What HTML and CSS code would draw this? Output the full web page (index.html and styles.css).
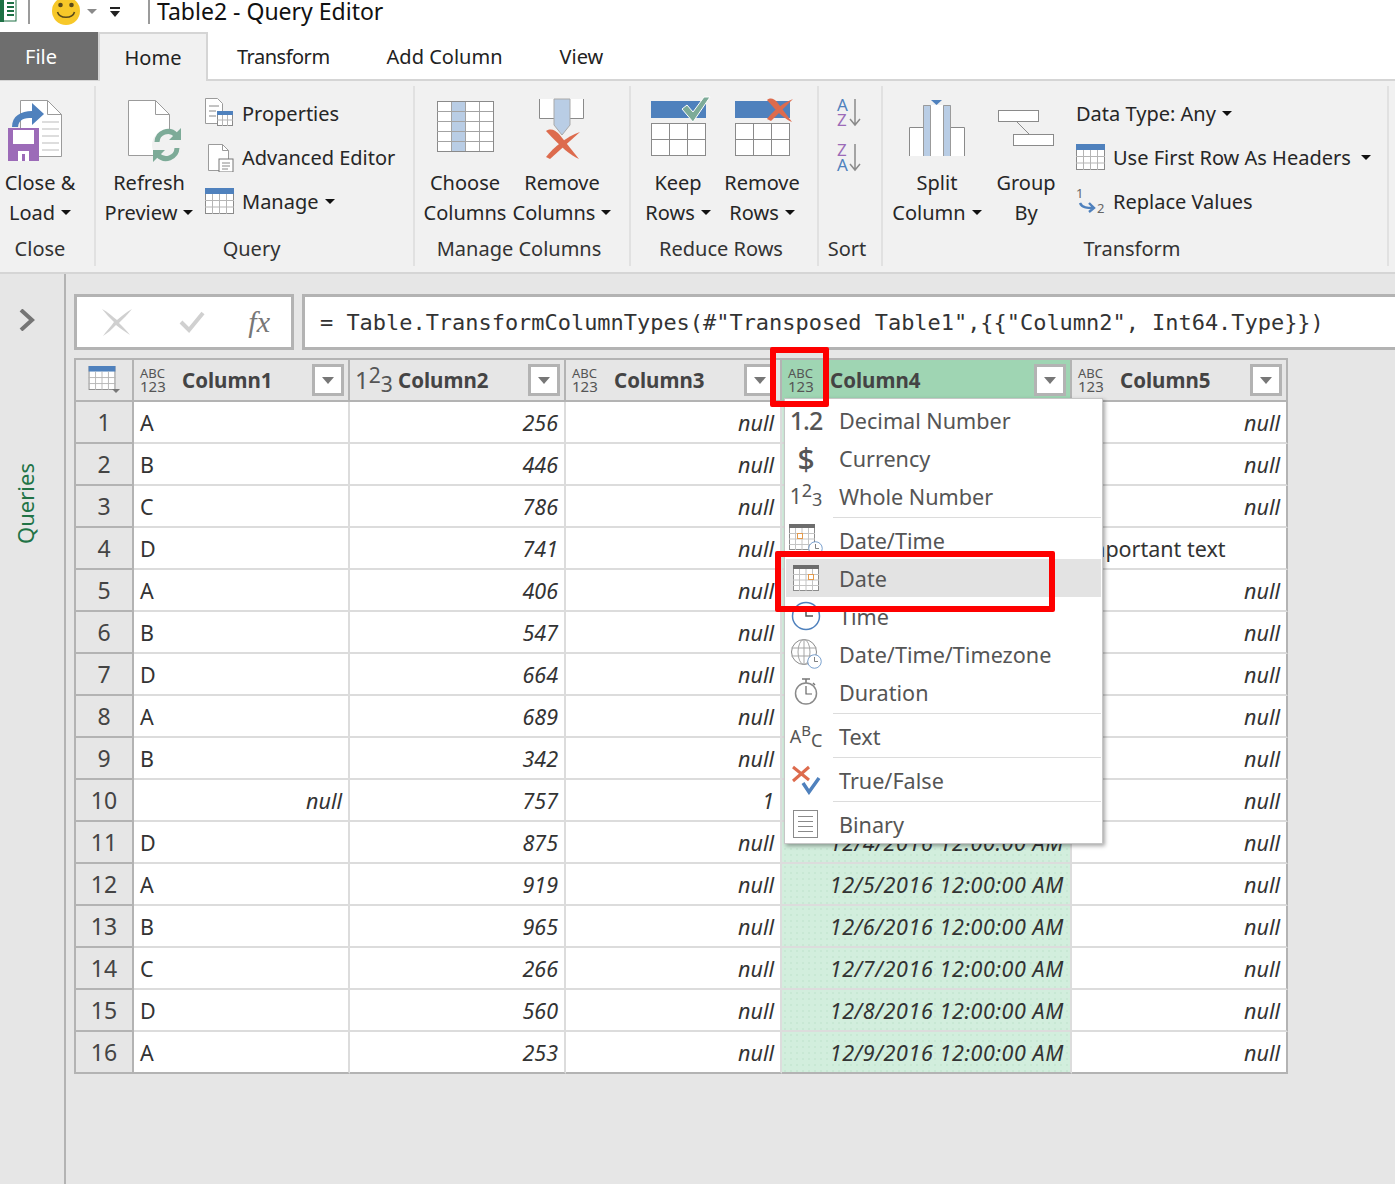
FILE: index.html
```html
<!DOCTYPE html>
<html lang="en">
<head>
    <meta charset="UTF-8">
    <title>Table2 - Query Editor</title>
    <link rel="stylesheet" href="styles.css">
</head>
<body>
    <!-- shared icons -->
    <svg class="sprites" width="0" height="0">
        <symbol id="tableBlue" viewBox="0 0 29 26">
            <rect x=".5" y=".5" width="28" height="25" fill="#fff" stroke="#8a8a8a"/>
            <rect width="29" height="6" fill="#4f81bd"/>
            <path d="M0 12.500h29M0 19h29M7.500 6v20M14.500 6v20M21.500 6v20" stroke="#b5b5b5" fill="none"/>
        </symbol>
        <symbol id="calendar" viewBox="0 0 26 26">
            <rect x=".5" y=".5" width="25" height="25" fill="#fff" stroke="#8c8c8c"/>
            <rect width="26" height="4" fill="#6d6d6d"/>
            <path d="M0 9.500h26M0 15h26M0 20.500h26M6.500 4v22M13 4v22M19.500 4v22" stroke="#c4c4c4" fill="none"/>
        </symbol>
        <symbol id="clock" viewBox="0 0 30 30">
            <circle cx="15" cy="15" r="13.500" fill="#fff" stroke="#4f81bd" stroke-width="1.500"/>
            <path d="M15 6v9h7" fill="none" stroke="#555" stroke-width="1.500"/>
        </symbol>
    </svg>

    <header class="titleBar">
        <svg class="excelIcon" width="20" height="24" viewBox="0 0 20 24">
            <rect x="5" y="-2" width="14" height="23" fill="#fff" stroke="#1e7145"/>
            <rect x="0" y="-2" width="7" height="24" fill="#1e7145"/>
            <path d="M10 3h7M10 7h7M10 11h7M10 15h7" stroke="#1e7145" stroke-width="2"/>
        </svg>
        <span class="titleSep sepFirst"></span>
        <svg class="smiley" width="30" height="30" viewBox="0 0 30 30">
            <circle cx="15" cy="15" r="14" fill="#f7c829"/>
            <circle cx="9.500" cy="9" r="2.300" fill="#5a4a1a"/>
            <circle cx="20.500" cy="9" r="2.300" fill="#5a4a1a"/>
            <path d="M6.500 16c2 7 15 7 17 0" fill="none" stroke="#5a4a1a" stroke-width="1.600"/>
        </svg>
        <span class="qatArrow"></span>
        <svg class="qatMenu" width="14" height="10" viewBox="0 0 14 10"><path d="M2 0h10v2H2zM2 4h10L7 10z" fill="#222"/></svg>
        <span class="titleSep"></span>
        <span class="titleText">Table2 - Query Editor</span>
    </header>

    <nav class="tabs">
        <div class="tab tabFile">File</div>
        <div class="tab tabActive">Home</div>
        <div class="tab tabTransform">Transform</div>
        <div class="tab">Add Column</div>
        <div class="tab">View</div>
    </nav>

    <section class="ribbon">
        <div class="group groupClose">
            <div class="groupBody">
                <div class="bigBtn btnClose">
                    <svg class="bigIcon" width="62" height="70" viewBox="9 0 62 70">
                        <path d="M20.500 5.500h27l14 14v42h-41z" fill="#fff" stroke="#9b9b9b"/>
                        <path d="M47.500 5.500v14h14" fill="none" stroke="#9b9b9b"/>
                        <path d="M42 27h17M42 34h17M42 41h17M42 48h17M42 55h17" stroke="#bbb"/>
                        <path d="M12 32c0-11 9-16 20-16V8l12 11-12 11v-7c-8 0-13 1-14 9z" fill="#4f81bd"/>
                        <path d="M8 33h31v33H8z" fill="#9c6bb8"/>
                        <path d="M13 35h21v14H13zM18 56h11v10H18z" fill="#fff"/>
                        <path d="M22 59h3v7h-3z" fill="#9c6bb8"/>
                    </svg>
                    <span>Close &amp;</span>
                    <span>Load<i class="caret"></i></span>
                </div>
            </div>
            <div class="groupLabel">Close</div>
        </div>

        <div class="group groupQuery">
            <div class="groupBody">
                <div class="bigBtn btnRefresh">
                    <svg class="bigIcon" width="64" height="70" viewBox="0 0 64 70">
                        <path d="M11.500 5.500h27l14 14v41h-41z" fill="#fff" stroke="#9b9b9b"/>
                        <path d="M38.500 5.500v14h14" fill="none" stroke="#9b9b9b"/>
                        <circle cx="50" cy="50" r="15" fill="#f1f1f1"/>
                        <path d="M40 47a11 11 0 0 1 19-7M60 53a11 11 0 0 1-19 7" fill="none" stroke="#7dab98" stroke-width="5"/>
                        <path d="M64 33v12H52zM36 67V55h12z" fill="#7dab98"/>
                    </svg>
                    <span>Refresh</span>
                    <span>Preview<i class="caret"></i></span>
                </div>
                <div class="smallList">
                    <div class="smallBtn">
                        <svg width="30" height="30" viewBox="0 0 30 30">
                            <path d="M.5.5h12l5 5v20H.5z" fill="#fff" stroke="#9b9b9b"/>
                            <path d="M4 8h10M4 13h7M4 18h7" stroke="#888"/>
                            <rect x="12.500" y="13.500" width="15" height="14" fill="#fff" stroke="#8a8a8a"/>
                            <rect x="12" y="13" width="16" height="4" fill="#4f81bd"/>
                            <path d="M12 22h16M17.500 17v11M22.500 17v11" stroke="#b5b5b5"/>
                        </svg>
                        <span>Properties</span>
                    </div>
                    <div class="smallBtn">
                        <svg width="30" height="30" viewBox="0 0 30 30">
                            <path d="M3.500 2.500h14l6 6v20h-20z" fill="#fff" stroke="#9b9b9b"/>
                            <path d="M17.500 2.500v6h6" fill="none" stroke="#9b9b9b"/>
                            <rect x="14" y="17" width="14" height="13" fill="#fff" stroke="#777"/>
                            <path d="M17 21h8M17 24h8M17 27h6" stroke="#888"/>
                        </svg>
                        <span>Advanced Editor</span>
                    </div>
                    <div class="smallBtn">
                        <svg width="30" height="30" viewBox="0 0 30 30"><use href="#tableBlue" width="29" height="26" y="2"/></svg>
                        <span>Manage<i class="caret"></i></span>
                    </div>
                </div>
            </div>
            <div class="groupLabel">Query</div>
        </div>

        <div class="group groupManage">
            <div class="groupBody">
                <div class="bigBtn btnChoose">
                    <svg class="bigIcon" width="60" height="70" viewBox="0 0 60 70">
                        <rect x="2.500" y="6.500" width="56" height="50" fill="#fff" stroke="#8a8a8a"/>
                        <rect x="17" y="7" width="14" height="49" fill="#b9cde5"/>
                        <path d="M2 16.500h56M2 26.500h56M2 36.500h56M2 46.500h56M16.500 7v49M30.500 7v49M44.500 7v49" stroke="#a3a3a3" fill="none"/>
                    </svg>
                    <span>Choose</span>
                    <span>Columns</span>
                </div>
                <div class="bigBtn btnRemoveCols">
                    <svg class="bigIcon" width="48" height="70" viewBox="0 0 48 70">
                        <path d="M1.500 4v19.500h44V4" fill="#fff" stroke="#8a8a8a"/>
                        <path d="M16 4h16v26l-8 10-8-10z" fill="#b9cde5" stroke="#a9a9a9"/>
                        <path d="M8 36c5-3 9-1 13 3l20 25c-8-3-18-12-33-28z" fill="#dd6b4d"/>
                        <path d="M42 37L12 64l-4-2c8-10 20-20 34-25z" fill="#dd6b4d"/>
                    </svg>
                    <span>Remove</span>
                    <span>Columns<i class="caret"></i></span>
                </div>
            </div>
            <div class="groupLabel">Manage Columns</div>
        </div>

        <div class="group groupReduce">
            <div class="groupBody">
                <div class="bigBtn btnRows">
                    <svg class="bigIcon" width="62" height="70" viewBox="-2 0 62 70">
                        <rect x="2" y="6" width="55" height="17" fill="#4f81bd"/>
                        <rect x="2.500" y="28.500" width="54" height="32" fill="#fff" stroke="#8a8a8a"/>
                        <path d="M2 44.500h55M20.500 28v33M38.500 28v33" stroke="#8a8a8a"/>
                        <path d="M33 14l5-4 6 7L55 2h6L44 27z" fill="#7dab98" stroke="#fff"/>
                    </svg>
                    <span>Keep</span>
                    <span>Rows<i class="caret"></i></span>
                </div>
                <div class="bigBtn btnRows">
                    <svg class="bigIcon" width="62" height="70" viewBox="-2 0 62 70">
                        <rect x="2" y="6" width="55" height="17" fill="#4f81bd"/>
                        <rect x="2.500" y="28.500" width="54" height="32" fill="#fff" stroke="#8a8a8a"/>
                        <path d="M2 44.500h55M20.500 28v33M38.500 28v33" stroke="#8a8a8a"/>
                        <path d="M34 5c4-3 7-1 10 2l15 20c-6-2-14-9-25-22z" fill="#dd6b4d"/>
                        <path d="M60 4L38 26l-4-2c6-8 14-15 26-20z" fill="#dd6b4d"/>
                    </svg>
                    <span>Remove</span>
                    <span>Rows<i class="caret"></i></span>
                </div>
            </div>
            <div class="groupLabel">Reduce Rows</div>
        </div>

        <div class="group groupSort">
            <div class="groupBody sortBody">
                <svg width="28" height="32" viewBox="0 0 28 32">
                    <text class="sortLetter" x="1" y="14" fill="#4f81bd">A</text>
                    <text class="sortLetter" x="1" y="29" fill="#9c6bb8">Z</text>
                    <path d="M19 2v26M14 22l5 6 5-6" fill="none" stroke="#8a8a8a" stroke-width="1.500"/>
                </svg>
                <svg width="28" height="32" viewBox="0 0 28 32">
                    <text class="sortLetter" x="1" y="14" fill="#9c6bb8">Z</text>
                    <text class="sortLetter" x="1" y="29" fill="#4f81bd">A</text>
                    <path d="M19 2v26M14 22l5 6 5-6" fill="none" stroke="#8a8a8a" stroke-width="1.500"/>
                </svg>
            </div>
            <div class="groupLabel">Sort</div>
        </div>

        <div class="group groupTransform">
            <div class="groupBody">
                <div class="bigBtn btnSplit">
                    <svg class="bigIcon" width="58" height="70" viewBox="0 0 58 70">
                        <rect x="1" y="32" width="14" height="29" fill="#fff"/>
                        <rect x="43" y="32" width="14" height="29" fill="#fff"/>
                        <path d="M1.500 61V32.500H15M56.500 61V32.500H43" fill="none" stroke="#8a8a8a"/>
                        <rect x="15" y="10" width="8" height="51" fill="#b9cde5"/>
                        <rect x="35" y="10" width="8" height="51" fill="#b9cde5"/>
                        <rect x="23" y="10" width="12" height="51" fill="#fff"/>
                        <path d="M15.500 61V10.500h7V61M35.500 61V10.500h7V61" fill="none" stroke="#9b9b9b"/>
                        <path d="M23 5h11l-5.500 5z" fill="#4f81bd"/>
                    </svg>
                    <span>Split</span>
                    <span>Column<i class="caret"></i></span>
                </div>
                <div class="bigBtn btnGroupBy">
                    <svg class="bigIcon" width="58" height="70" viewBox="0 0 58 70">
                        <rect x="1.500" y="15.500" width="40" height="11" fill="#fff" stroke="#8a8a8a"/>
                        <rect x="16.500" y="39.500" width="40" height="11" fill="#fff" stroke="#8a8a8a"/>
                        <path d="M20 27l12 12" stroke="#8a8a8a"/>
                    </svg>
                    <span>Group</span>
                    <span>By</span>
                </div>
                <div class="smallList listTransform">
                    <div class="smallBtn noIcon"><span>Data Type: Any<i class="caret"></i></span></div>
                    <div class="smallBtn">
                        <svg width="30" height="30" viewBox="0 0 30 30"><use href="#tableBlue" width="29" height="26" y="2"/></svg>
                        <span>Use First Row As Headers<i class="caret caretWide"></i></span>
                    </div>
                    <div class="smallBtn">
                        <svg width="30" height="30" viewBox="0 0 30 30">
                            <text class="replaceNum" x="0" y="12">1</text>
                            <text class="replaceNum" x="21" y="27">2</text>
                            <path d="M4 17c2 5 8 5 13 5M13 17l5 5-5 4" fill="none" stroke="#4f81bd" stroke-width="2.400"/>
                        </svg>
                        <span>Replace Values</span>
                    </div>
                </div>
            </div>
            <div class="groupLabel">Transform</div>
        </div>
    </section>

    <main class="workspace">
        <aside class="sidebar">
            <svg class="chevron" width="16" height="22" viewBox="0 0 16 22"><path d="M2 1l11 10L2 21" fill="none" stroke="#757575" stroke-width="4"/></svg>
            <div class="queriesLabel">Queries</div>
        </aside>

        <div class="content">
            <div class="formulaRow">
                <div class="formulaBtns">
                    <svg width="32" height="28" viewBox="0 0 32 28"><path d="M1 1c6 3 11 8 15 11 5-4 9-8 15-11-4 5-9 10-13 14 4 4 8 8 11 12-5-3-10-7-14-10-4 4-8 8-13 11 3-5 8-9 11-14C9 10 5 6 1 1z" fill="#d0d0d0"/></svg>
                    <svg class="checkIcon" width="26" height="24" viewBox="0 0 26 24"><path d="M2 12l8 8L24 3" fill="none" stroke="#d0d0d0" stroke-width="4"/></svg>
                    <span class="fxLabel">fx</span>
                </div>
                <div class="formulaInput">= Table.TransformColumnTypes(#"Transposed Table1",{{"Column2", Int64.Type}})</div>
            </div>

            <div class="tableWrap">
                <div class="dataGrid">
                    <div class="headCell cornerCell">
                        <svg width="32" height="28" viewBox="0 0 32 28">
                            <use href="#tableBlue" width="28" height="24"/>
                            <path d="M24 23h8l-4 4z" fill="#777"/>
                        </svg>
                    </div>
                    <div class="headCell"><span class="typeIcon typeAny"><b>ABC</b><b>123</b></span><span class="colName">Column1</span><span class="filterBtn"></span></div>
                    <div class="headCell"><span class="typeIcon typeWhole">1<sup>2</sup><sub>3</sub></span><span class="colName">Column2</span><span class="filterBtn"></span></div>
                    <div class="headCell"><span class="typeIcon typeAny"><b>ABC</b><b>123</b></span><span class="colName">Column3</span><span class="filterBtn"></span></div>
                    <div class="headCell headSelected"><span class="typeIcon typeAny"><b>ABC</b><b>123</b></span><span class="colName">Column4</span><span class="filterBtn"></span></div>
                    <div class="headCell"><span class="typeIcon typeAny"><b>ABC</b><b>123</b></span><span class="colName">Column5</span><span class="filterBtn"></span></div>

                    <div class="rowNum">1</div><div class="cell">A</div><div class="cell num">256</div><div class="cell num">null</div><div class="cell num sel"></div><div class="cell num">null</div>
                    <div class="rowNum">2</div><div class="cell">B</div><div class="cell num">446</div><div class="cell num">null</div><div class="cell num sel"></div><div class="cell num">null</div>
                    <div class="rowNum">3</div><div class="cell">C</div><div class="cell num">786</div><div class="cell num">null</div><div class="cell num sel"></div><div class="cell num">null</div>
                    <div class="rowNum">4</div><div class="cell">D</div><div class="cell num">741</div><div class="cell num">null</div><div class="cell num sel"></div><div class="cell">Important text</div>
                    <div class="rowNum">5</div><div class="cell">A</div><div class="cell num">406</div><div class="cell num">null</div><div class="cell num sel"></div><div class="cell num">null</div>
                    <div class="rowNum">6</div><div class="cell">B</div><div class="cell num">547</div><div class="cell num">null</div><div class="cell num sel"></div><div class="cell num">null</div>
                    <div class="rowNum">7</div><div class="cell">D</div><div class="cell num">664</div><div class="cell num">null</div><div class="cell num sel"></div><div class="cell num">null</div>
                    <div class="rowNum">8</div><div class="cell">A</div><div class="cell num">689</div><div class="cell num">null</div><div class="cell num sel"></div><div class="cell num">null</div>
                    <div class="rowNum">9</div><div class="cell">B</div><div class="cell num">342</div><div class="cell num">null</div><div class="cell num sel"></div><div class="cell num">null</div>
                    <div class="rowNum">10</div><div class="cell num">null</div><div class="cell num">757</div><div class="cell num">1</div><div class="cell num sel"></div><div class="cell num">null</div>
                    <div class="rowNum">11</div><div class="cell">D</div><div class="cell num">875</div><div class="cell num">null</div><div class="cell num sel">12/4/2016 12:00:00 AM</div><div class="cell num">null</div>
                    <div class="rowNum">12</div><div class="cell">A</div><div class="cell num">919</div><div class="cell num">null</div><div class="cell num sel">12/5/2016 12:00:00 AM</div><div class="cell num">null</div>
                    <div class="rowNum">13</div><div class="cell">B</div><div class="cell num">965</div><div class="cell num">null</div><div class="cell num sel">12/6/2016 12:00:00 AM</div><div class="cell num">null</div>
                    <div class="rowNum">14</div><div class="cell">C</div><div class="cell num">266</div><div class="cell num">null</div><div class="cell num sel">12/7/2016 12:00:00 AM</div><div class="cell num">null</div>
                    <div class="rowNum">15</div><div class="cell">D</div><div class="cell num">560</div><div class="cell num">null</div><div class="cell num sel">12/8/2016 12:00:00 AM</div><div class="cell num">null</div>
                    <div class="rowNum">16</div><div class="cell">A</div><div class="cell num">253</div><div class="cell num">null</div><div class="cell num sel">12/9/2016 12:00:00 AM</div><div class="cell num">null</div>
                </div>

                <!-- data type dropdown, sits over the grid -->
                <div class="typeMenu">
                    <div class="menuItem"><span class="menuIcon iconDecimal">1.2</span>Decimal Number</div>
                    <div class="menuItem"><span class="menuIcon iconDollar">$</span>Currency</div>
                    <div class="menuItem"><span class="menuIcon typeWhole">1<sup>2</sup><sub>3</sub></span>Whole Number</div>
                    <div class="menuSep"></div>
                    <div class="menuItem">
                        <span class="menuIcon">
                            <svg width="34" height="32" viewBox="0 0 34 32">
                                <use href="#calendar" width="26" height="26"/>
                                <rect x="8.500" y="9.500" width="5" height="5" fill="#fff" stroke="#e39a4c"/>
                                <use href="#clock" x="19" y="17" width="15" height="15"/>
                            </svg>
                        </span>Date/Time
                    </div>
                    <div class="menuItem menuHover">
                        <span class="menuIcon">
                            <svg width="26" height="26" viewBox="0 0 26 26">
                                <use href="#calendar" width="26" height="26"/>
                                <rect x="15.500" y="9.500" width="5" height="5" fill="#fff" stroke="#e39a4c"/>
                            </svg>
                        </span>Date
                    </div>
                    <div class="menuItem">
                        <span class="menuIcon"><svg width="30" height="30" viewBox="0 0 30 30"><use href="#clock" width="30" height="30"/></svg></span>Time
                    </div>
                    <div class="menuItem">
                        <span class="menuIcon">
                            <svg width="32" height="30" viewBox="0 0 32 30">
                                <circle cx="14" cy="13" r="12.500" fill="#fff" stroke="#8a8a8a"/>
                                <ellipse cx="14" cy="13" rx="6" ry="12.500" fill="none" stroke="#a5a5a5"/>
                                <path d="M1.500 9h25M1.500 17h25M14 .5v25" stroke="#a5a5a5" fill="none"/>
                                <use href="#clock" x="17" y="15" width="15" height="15"/>
                            </svg>
                        </span>Date/Time/Timezone
                    </div>
                    <div class="menuItem">
                        <span class="menuIcon">
                            <svg width="24" height="28" viewBox="0 0 24 28">
                                <path d="M8 1h8M12 1v4M19 5l2 2" stroke="#777" stroke-width="1.500"/>
                                <circle cx="12" cy="15.500" r="10.500" fill="#fff" stroke="#8a8a8a" stroke-width="1.500"/>
                                <path d="M12 8v8h6" fill="none" stroke="#666" stroke-width="1.200"/>
                            </svg>
                        </span>Duration
                    </div>
                    <div class="menuSep"></div>
                    <div class="menuItem"><span class="menuIcon iconText">A<sup>B</sup><sub>C</sub></span>Text</div>
                    <div class="menuSep"></div>
                    <div class="menuItem">
                        <span class="menuIcon">
                            <svg width="30" height="30" viewBox="0 0 30 30">
                                <path d="M2 2l16 13M18 2L2 16" fill="none" stroke="#dd6b4d" stroke-width="3"/>
                                <path d="M12 18l6 9 10-14" fill="none" stroke="#4f81bd" stroke-width="3.500"/>
                            </svg>
                        </span>True/False
                    </div>
                    <div class="menuSep"></div>
                    <div class="menuItem">
                        <span class="menuIcon">
                            <svg width="26" height="28" viewBox="0 0 26 28">
                                <rect x=".5" y=".5" width="24" height="27" fill="#fff" stroke="#8a8a8a"/>
                                <path d="M5 6.500h15M5 11.500h15M5 16.500h15M5 21.500h15" stroke="#8a8a8a"/>
                            </svg>
                        </span>Binary
                    </div>
                </div>

                <div class="redBox redBoxHead"></div>
                <div class="redBox redBoxDate"></div>
            </div>
        </div>
    </main>
</body>
</html>
```

FILE: styles.css
```css
* {
    margin: 0;
    padding: 0;
    box-sizing: border-box;
}
html, body {
    height: 100%;
    overflow: hidden;
}
body {
    display: flex;
    flex-direction: column;
    font-family: "Noto Sans", "Open Sans", sans-serif;
    font-size: 20px;
    color: #262626;
    background-color: #fff;
}
.sprites {
    position: absolute;
}

/* title bar */
.titleBar {
    display: flex;
    height: 32px;
    flex: none;
    overflow: hidden;
    background-color: #fff;
}
.excelIcon {
    margin-left: -3px;
}
.titleSep {
    width: 2px;
    height: 24px;
    margin-left: 26px;
    background-color: #9b9b9b;
}
.sepFirst {
    margin-left: 11px;
}
.smiley {
    margin-top: -4px;
    margin-left: 21px;
}
.qatArrow {
    width: 0;
    height: 0;
    margin: 9px 0 0 6px;
    border-left: 5px solid transparent;
    border-right: 5px solid transparent;
    border-top: 5px solid #8a8a8a;
}
.qatMenu {
    margin: 7px 0 0 11px;
}
.titleText {
    margin-left: 7px;
    font-size: 23px;
    line-height: 22px;
    color: #111;
}

/* tabs */
.tabs {
    display: flex;
    flex: none;
    height: 49px;
    border-bottom: 2px solid #d5d5d5;
}
.tab {
    display: flex;
    align-items: center;
    height: 48px;
    padding: 1px 28px 0 29px;
    font-size: 20px;
    color: #222;
}
.tabTransform {
    letter-spacing: -.5px;
}
.tabFile {
    width: 98px;
    justify-content: center;
    padding: 0 16px 0 0;
    color: #fff;
    background-color: #6e6e6e;
}
.tabActive {
    width: 110px;
    height: 49px;
    justify-content: center;
    padding: 0;
    background-color: #f1f1f1;
    border: 2px solid #d5d5d5;
    border-bottom: none;
}

/* ribbon */
.ribbon {
    display: flex;
    flex: none;
    height: 193px;
    padding-top: 5px;
    background-color: #f1f1f1;
    border-bottom: 2px solid #d5d5d5;
}
.group {
    display: flex;
    flex-direction: column;
    height: 180px;
    flex: none;
    border-right: 2px solid #e1e1e1;
}
.groupClose { width: 96px; }
.groupQuery { width: 319px; }
.groupManage { width: 216px; }
.groupReduce { width: 188px; }
.groupSort { width: 64px; }
.groupTransform { width: 506px; }
.groupBody {
    display: flex;
    flex: 1;
}
.groupLabel {
    height: 34px;
    padding-right: 6px;
    line-height: 34px;
    text-align: center;
    font-size: 20px;
    color: #333;
}
.groupClose .groupLabel {
    padding-right: 14px;
}
.bigBtn {
    display: flex;
    flex-direction: column;
    align-items: center;
    flex: none;
    font-size: 20px;
    line-height: 30px;
    white-space: nowrap;
}
.bigIcon {
    display: block;
    height: 70px;
    margin-top: 9px;
    margin-bottom: 3px;
    overflow: visible;
}
.btnClose { width: 80px; }
.btnRefresh { width: 100px; margin-left: 3px; }
.btnChoose { width: 92px; margin-left: 4px; }
.btnRemoveCols { width: 100px; margin-left: 1px; }
.btnRows { width: 80px; margin-left: 7px; }
.btnRows + .btnRows { margin-left: 4px; }
.btnSplit { width: 92px; margin-left: 8px; }
.btnGroupBy { width: 86px; }
.caret {
    display: inline-block;
    width: 0;
    height: 0;
    margin-left: 6px;
    vertical-align: 5px;
    border-left: 5px solid transparent;
    border-right: 5px solid transparent;
    border-top: 5px solid #111;
}
.caretWide {
    margin-left: 10px;
}
.smallList {
    display: flex;
    flex-direction: column;
    gap: 14px;
    margin-left: 6px;
    padding-top: 12px;
}
.listTransform {
    margin-left: 7px;
}
.smallBtn {
    display: flex;
    align-items: center;
    gap: 7px;
    height: 30px;
    font-size: 20px;
    white-space: nowrap;
}
.sortBody {
    flex-direction: column;
    gap: 13px;
    padding: 11px 0 0 17px;
}
.sortLetter {
    font-size: 17px;
}
.replaceNum {
    font-size: 13px;
    fill: #666;
}

/* work area */
.workspace {
    display: flex;
    flex: 1;
    min-height: 0;
    background-color: #e6e6e6;
}
.sidebar {
    display: flex;
    flex-direction: column;
    align-items: center;
    width: 66px;
    flex: none;
    padding-top: 35px;
    padding-right: 14px;
    border-right: 2px solid #b3b3b3;
}
.chevron {
    margin-left: 4px;
}
.queriesLabel {
    margin-top: 132px;
    writing-mode: vertical-rl;
    transform: rotate(180deg);
    font-size: 22px;
    color: #217346;
}
.content {
    flex: 1;
    min-width: 0;
    padding: 20px 0 0 8px;
}
.formulaRow {
    display: flex;
    gap: 8px;
    height: 56px;
}
.formulaBtns {
    display: flex;
    align-items: center;
    justify-content: space-between;
    width: 220px;
    flex: none;
    padding: 0 21px 0 24px;
    background-color: #fff;
    border: 3px solid #b3b3b3;
}
.checkIcon {
    margin-left: 3px;
}
.fxLabel {
    font-family: "Liberation Serif", serif;
    font-style: italic;
    font-size: 30px;
    color: #777;
}
.formulaInput {
    display: flex;
    align-items: center;
    flex: 1;
    margin-right: -4px;
    padding-left: 15px;
    font-family: "DejaVu Sans Mono", monospace;
    font-size: 21.950px;
    white-space: nowrap;
    overflow: hidden;
    color: #333;
    background-color: #fff;
    border: 3px solid #b3b3b3;
    border-right: none;
}

/* data grid */
.tableWrap {
    position: relative;
    width: 1214px;
    margin-top: 8px;
}
.dataGrid {
    display: grid;
    grid-template-columns: 58px 216px 216px 216px 290px 216px;
    grid-auto-rows: 42px;
    border-top: 2px solid #b3b3b3;
    border-left: 2px solid #b3b3b3;
}
.headCell {
    display: flex;
    align-items: center;
    padding-right: 4px;
    background-color: #e6e6e6;
    border-right: 2px solid #b3b3b3;
    border-bottom: 2px solid #b3b3b3;
}
.cornerCell {
    justify-content: center;
    padding: 0;
}
.headSelected {
    background-color: #9fd5b3;
}
.typeIcon {
    width: 48px;
    flex: none;
    color: #555;
}
.typeAny {
    display: flex;
    flex-direction: column;
    align-items: flex-start;
    padding-left: 6px;
}
.typeAny b {
    font-weight: 400;
    line-height: 13px;
    font-size: 13px;
}
.typeAny b + b {
    font-size: 15px;
}
.typeWhole {
    font-size: 24px;
    line-height: 30px;
    padding-left: 5px;
    white-space: nowrap;
}
.typeWhole sup {
    font-size: 21px;
    position: relative;
    top: -6px;
    vertical-align: baseline;
}
.typeWhole sub {
    font-size: 21px;
    position: relative;
    top: 3px;
    vertical-align: baseline;
}
.colName {
    flex: 1;
    font-size: 20.500px;
    font-weight: 700;
    color: #444;
}
.filterBtn {
    display: flex;
    align-items: center;
    justify-content: center;
    width: 32px;
    height: 32px;
    background-color: #fff;
    border: 3px solid #b3b3b3;
}
.filterBtn::after {
    content: "";
    border-left: 6px solid transparent;
    border-right: 6px solid transparent;
    border-top: 7px solid #777;
}
.rowNum {
    display: flex;
    align-items: center;
    justify-content: center;
    font-size: 23px;
    color: #444;
    background-color: #e6e6e6;
    border-right: 2px solid #b3b3b3;
    border-bottom: 2px solid #b3b3b3;
}
.cell {
    display: flex;
    align-items: center;
    padding: 0 6px;
    font-size: 21.500px;
    color: #333;
    white-space: nowrap;
    overflow: hidden;
    background-color: #fff;
    border-right: 2px solid #dcdcdc;
    border-bottom: 2px solid #dcdcdc;
}
.num {
    justify-content: flex-end;
    font-style: italic;
}
.sel {
    letter-spacing: .6px;
    background-color: #d2eedd;
    background-image: radial-gradient(#c8e8d4 1px, transparent 1px);
    background-size: 6px 6px;
}
.dataGrid > :nth-child(6n) {
    border-right-color: #b3b3b3;
}
.dataGrid > :nth-last-child(-n+5) {
    border-bottom-color: #b3b3b3;
}

/* type menu */
.typeMenu {
    position: absolute;
    left: 710px;
    top: 40px;
    width: 319px;
    height: 446px;
    padding: 2px 1px;
    color: #555;
    font-size: 21.600px;
    background-color: #fff;
    border: 1px solid #c6c6c6;
    box-shadow: 2px 2px 4px rgba(0, 0, 0, .35);
}
.menuItem {
    display: flex;
    align-items: center;
    height: 38px;
    white-space: nowrap;
}
.menuHover {
    background-color: #e3e3e3;
}
.menuIcon {
    display: flex;
    align-items: center;
    justify-content: center;
    width: 40px;
    height: 38px;
    margin-right: 13px;
    flex: none;
}
.menuIcon.typeWhole {
    padding-left: 0;
    font-size: 21px;
}
.menuIcon.typeWhole sup,
.menuIcon.typeWhole sub {
    font-size: 18px;
}
.iconDecimal {
    font-size: 25px;
    font-weight: 500;
    letter-spacing: -1px;
}
.iconDollar {
    font-size: 30px;
    font-weight: 500;
}
.iconText {
    font-size: 18px;
    white-space: nowrap;
}
.iconText sup {
    font-size: 15px;
    position: relative;
    top: -6px;
    vertical-align: baseline;
}
.iconText sub {
    font-size: 18px;
    position: relative;
    top: 4px;
    vertical-align: baseline;
}
.menuSep {
    height: 6px;
    margin-left: 47px;
    padding-top: 2px;
}
.menuSep::before {
    content: "";
    display: block;
    height: 1px;
    background-color: #dcdcdc;
}

/* red annotation boxes drawn on the screenshot */
.redBox {
    position: absolute;
    border: 6px solid #fe0000;
    border-radius: 2px;
}
.redBoxHead {
    left: 696px;
    top: -11px;
    width: 59px;
    height: 60px;
}
.redBoxDate {
    left: 701px;
    top: 193px;
    width: 280px;
    height: 61px;
}
```
